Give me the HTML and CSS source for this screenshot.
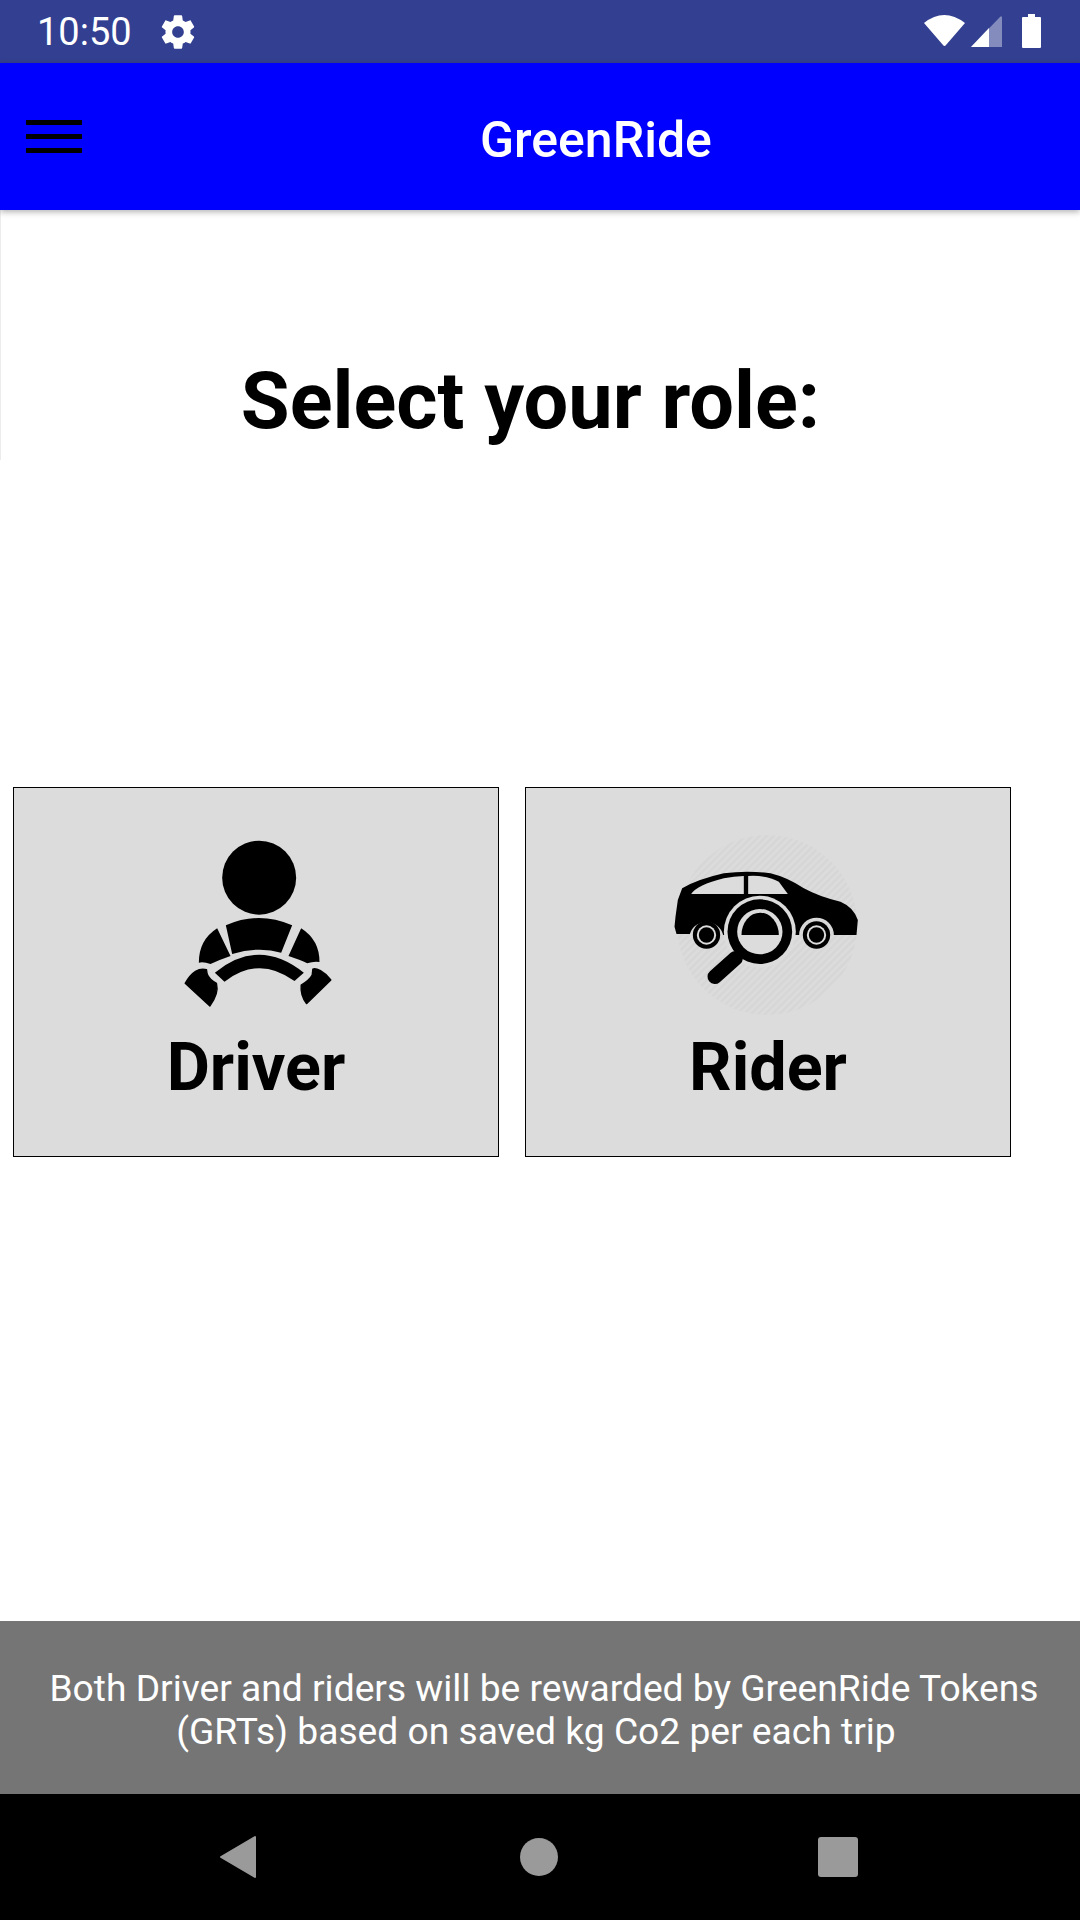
FILE: index.html
```html
<!DOCTYPE html>
<html lang="en">
<head>
    <meta charset="UTF-8">
    <title>GreenRide</title>
    <link rel="stylesheet" href="styles.css">
</head>
<body>
    <div class="phone">
        <div class="status-bar">
            <span class="clock">10:50</span>
            <svg class="gear" viewBox="0 0 24 24"><path fill="#fff" d="M19.43 12.98c.04-.32.07-.64.07-.98s-.03-.66-.07-.98l2.11-1.65c.19-.15.24-.42.12-.64l-2-3.46c-.12-.22-.39-.3-.61-.22l-2.49 1c-.52-.4-1.08-.73-1.69-.98l-.38-2.65C14.46 2.18 14.25 2 14 2h-4c-.25 0-.46.18-.49.42l-.38 2.65c-.61.25-1.17.59-1.69.98l-2.49-1c-.23-.09-.49 0-.61.22l-2 3.46c-.13.22-.07.49.12.64l2.11 1.65c-.04.32-.07.65-.07.98s.03.66.07.98l-2.11 1.65c-.19.15-.24.42-.12.64l2 3.46c.12.22.39.3.61.22l2.49-1c.52.4 1.08.73 1.69.98l.38 2.65c.03.24.24.42.49.42h4c.25 0 .46-.18.49-.42l.38-2.65c.61-.25 1.17-.59 1.69-.98l2.49 1c.23.09.49 0 .61-.22l2-3.46c.12-.22.07-.49-.12-.64l-2.11-1.65zM12 15.5c-1.93 0-3.5-1.57-3.5-3.5s1.57-3.5 3.5-3.5 3.5 1.57 3.5 3.5-1.57 3.5-3.5 3.5z"/></svg>
            <svg class="status-icons" viewBox="0 0 140 63">
                <path fill="#fff" d="M14 23 Q34 7 55 23 L36 45 Q34.500 47 33 45 Z"/>
                <path fill="#fff" opacity="0.4" d="M61 47 L90 17 Q92 15 92 18 L92 47 Z"/>
                <path fill="#fff" d="M61 47 L79 28 L79 47 Z"/>
                <path fill="#fff" d="M118 14 h7 v3 h5 q1 0 1 1 v29 q0 1 -1 1 h-17 q-1 0 -1 -1 v-29 q0 -1 1 -1 h5 z"/>
            </svg>
        </div>
        <header class="app-bar">
            <div class="menu-btn"><span></span><span></span><span></span></div>
            <div class="app-title">GreenRide</div>
        </header>
        <main class="content">
            <div class="heading-wrap">
                <h1>Select your role:</h1>
            </div>
            <div class="roles">
                <div class="role-card">
                    <svg class="role-icon" viewBox="-13.5 0 660 600">
                        <circle cx="326" cy="173" r="111"/>
                        <path d="M226 316 Q325 272 425 316 L392 398 Q325 378 245 402 Z"/>
                        <path d="M200 325 L240 408 Q205 420 180 432 Q160 425 145 428 Q145 360 200 325 Z"/>
                        <path d="M452 325 L414 408 Q450 420 470 430 Q490 423 507 426 Q507 360 452 325 Z"/>
                        <path d="M193 458 Q325 350 460 458 L432 483 Q325 405 222 485 Z"/>
                        <path class="hand" d="M104 490 Q118 465 135 454 Q152 444 168 449 L170 462 Q176 478 198 490 Q206 520 178 558 Z"/>
                        <path class="hand" d="M541 480 Q528 462 510 452 Q495 444 487 447 L485 465 Q477 480 452 495 Q449 525 468 551 Z"/>
                    </svg>
                    <div class="role-label">Driver</div>
                </div>
                <div class="role-card">
                    <svg class="role-icon" viewBox="-7.500 0 660 600">
                        <defs>
                            <pattern id="hatch" width="15" height="15" patternUnits="userSpaceOnUse" patternTransform="rotate(-45)">
                                <rect width="15" height="7.5" fill="#d6d6d6"/>
                            </pattern>
                        </defs>
                        <circle cx="320" cy="315" r="270" fill="url(#hatch)"/>
                        <path d="M42 320 L45 290 L52 240 L65 205 Q110 178 190 160 Q260 150 330 160 Q380 172 430 205 Q480 232 540 245 Q580 262 592 300 L588 345 L520 345 A52 52 0 0 0 416 345 L188 345 A52 52 0 0 0 88 342 L48 342 Z"/>
                        <path class="cut" d="M92 222 Q110 195 190 175 Q220 169 250 168 L250 222 Z"/>
                        <path class="cut" d="M263 168 Q320 165 355 185 L382 222 L263 222 Z"/>
                        <circle cx="138" cy="345" r="41"/>
                        <circle cx="138" cy="345" r="29" class="cut"/>
                        <circle cx="138" cy="345" r="23"/>
                        <circle cx="468" cy="345" r="41"/>
                        <circle cx="468" cy="345" r="29" class="cut"/>
                        <circle cx="468" cy="345" r="23"/>
                        <circle cx="298" cy="335" r="108" class="cut"/>
                        <line x1="225" y1="415" x2="163" y2="470" stroke="#000" stroke-width="44" stroke-linecap="round"/>
                        <circle cx="298" cy="335" r="97"/>
                        <circle cx="298" cy="335" r="68" class="cut"/>
                        <path d="M243 345 A56 67 0 0 1 355 345 Z"/>
                    </svg>
                    <div class="role-label">Rider</div>
                </div>
            </div>
        </main>
        <div class="note">
            <div class="note-line first">Both Driver and riders will be rewarded by GreenRide Tokens</div>
            <div class="note-line second">(GRTs) based on saved kg Co2 per each trip</div>
        </div>
        <nav class="nav-bar">
            <svg class="nav-icons" viewBox="0 0 1080 126">
                <path d="M221 63 L255 43 L255 83 Z" fill="#9a9a9a" stroke="#9a9a9a" stroke-width="2" stroke-linejoin="round"/>
                <circle cx="539" cy="63" r="19" fill="#9a9a9a"/>
                <rect x="818" y="43" width="40" height="40" rx="3" fill="#9a9a9a"/>
            </svg>
        </nav>
    </div>
</body>
</html>
```
FILE: styles.css
```css
body {
    margin: 0;
    font-family: Roboto, Arial, sans-serif;
    color: #000;
    background-color: #fff;
}
.phone {
    display: flex;
    flex-direction: column;
    width: 1080px;
    height: 1920px;
    overflow: hidden;
}
.status-bar {
    display: flex;
    align-items: center;
    height: 63px;
    flex-shrink: 0;
    padding-left: 37px;
    box-sizing: border-box;
    background-color: #334091;
    color: #fff;
}
.clock {
    font-size: 38px;
}
.gear {
    width: 40px;
    height: 40px;
    margin-left: 26px;
}
.status-icons {
    width: 140px;
    height: 63px;
    margin-left: auto;
    margin-right: 30px;
}
.app-bar {
    display: flex;
    align-items: center;
    height: 147px;
    flex-shrink: 0;
    padding-left: 26px;
    padding-top: 6px;
    box-sizing: border-box;
    background-color: #0000ff;
    box-shadow: 0 2px 6px rgba(0, 0, 0, 0.3);
    position: relative;
}
.menu-btn {
    display: flex;
    flex-direction: column;
    gap: 9px;
    width: 56px;
    margin-top: -6px;
}
.menu-btn span {
    display: block;
    height: 5px;
    background-color: #000;
}
.app-title {
    margin-left: 398px;
    font-size: 50px;
    font-weight: 500;
    color: #fff;
}
.content {
    flex: 1;
}
.heading-wrap {
    height: 250px;
    padding-top: 149px;
    padding-right: 20px;
    box-sizing: border-box;
    border-left: 1px solid #ececec;
}
h1 {
    margin: 0;
    font-size: 79.3px;
    font-weight: 700;
    line-height: 84px;
    text-align: center;
}
.roles {
    display: flex;
    gap: 26px;
    margin-top: 327px;
    padding-left: 13px;
}
.role-card {
    display: flex;
    flex-direction: column;
    align-items: center;
    width: 486px;
    height: 370px;
    padding-top: 32px;
    box-sizing: border-box;
    background-color: #dcdcdc;
    border: 1px solid #000;
}
.role-icon {
    width: 220px;
    height: 200px;
    flex-shrink: 0;
}
.cut {
    fill: #dcdcdc;
}
.hand {
    stroke: #000;
    stroke-width: 4;
    stroke-linejoin: round;
}
.role-label {
    font-size: 66.5px;
    font-weight: 700;
    line-height: 70px;
    margin-top: 12px;
}
.note {
    height: 173px;
    flex-shrink: 0;
    padding-top: 46px;
    box-sizing: border-box;
    background-color: #757575;
    color: #fff;
    font-size: 37.2px;
    line-height: 43px;
    text-align: center;
}
.note-line.first {
    padding-left: 8px;
}
.note-line.second {
    padding-right: 8px;
}
.nav-bar {
    height: 126px;
    flex-shrink: 0;
    background-color: #000;
}
.nav-icons {
    display: block;
    width: 1080px;
    height: 126px;
}
```
